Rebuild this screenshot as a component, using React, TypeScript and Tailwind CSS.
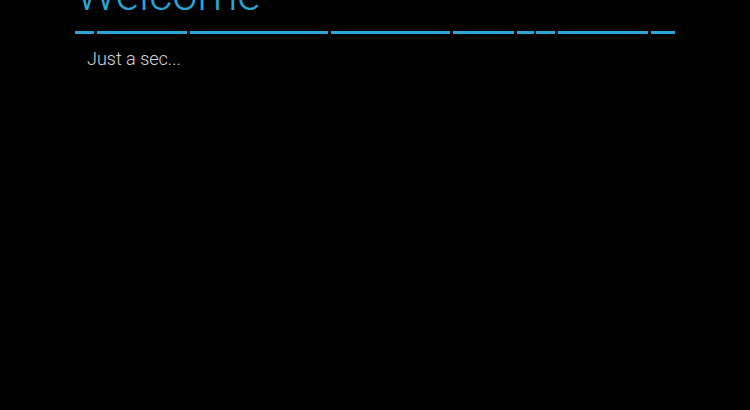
import React from "react";

const segs = [19, 90, 138, 119, 61, 17, 19, 90, 24];
const gaps = [3, 3, 3, 3, 3, 2, 3, 3];

export default function App() {
  return (
    <div className="w-[750px] h-[410px] bg-black overflow-hidden" style={{ fontFamily: "Roboto, 'Noto Sans', sans-serif" }}>
      <div className="w-[600px] mx-auto flex flex-col">
        <div className="text-[45px] leading-[45px] font-light text-[#2ba5d8] -mt-[28px] h-[59px] pl-[1px]">Welcome</div>
        <div className="flex h-[3px]">
          {segs.map((w, i) => (
            <React.Fragment key={i}>
              <div className="h-[3px] bg-[#2ba5d8]" style={{ width: w }} />
              {i < gaps.length && <div style={{ width: gaps[i] }} />}
            </React.Fragment>
          ))}
        </div>
        <div className="pl-[12px] mt-[13px] text-[18px] leading-[24px] font-light text-[#d8d8d8]">Just a sec...</div>
      </div>
    </div>
  );
}
